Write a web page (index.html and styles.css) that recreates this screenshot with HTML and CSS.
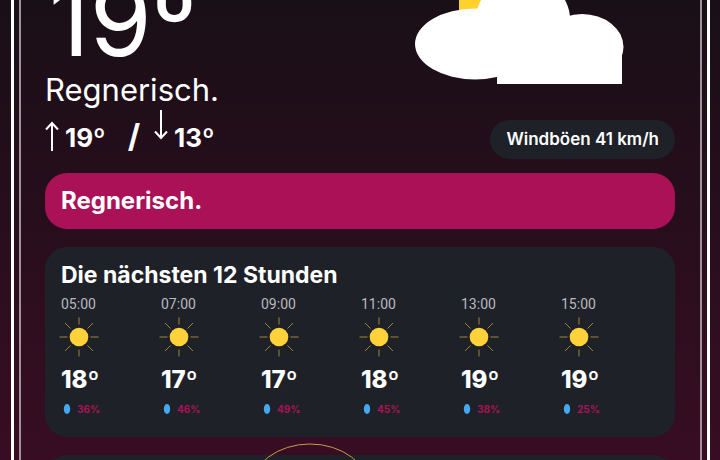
FILE: index.html
```html
<!DOCTYPE html>
<html lang="de">
<head>
    <meta charset="UTF-8">
    <meta name="viewport" content="width=device-width, initial-scale=1.0">
    <title>Wetter</title>
    <link rel="stylesheet" href="styles.css">
</head>
<body>
    <svg width="0" height="0" class="symbols" aria-hidden="true">
        <symbol id="sun" viewBox="0 0 40 40">
            <circle cx="20" cy="20" r="9.3" fill="#ffd23a"/>
            <path d="M20 .5v7M20 32.500v7M.5 20h8M31.500 20h8M6 6l5.500 5.500M28.500 28.500l5.500 5.500M6 34l5.500-5.500M28.500 11.500l5.500-5.500" stroke="#9c8637" stroke-width="1" fill="none"/>
        </symbol>
        <symbol id="drop" viewBox="0 0 12 12">
            <ellipse cx="6" cy="6" rx="3.2" ry="5" fill="#42a9ee"/>
        </symbol>
    </svg>

    <div class="frame">
        <main class="content">
            <section class="current">
                <div class="reading">
                    <h1 class="temperature">19º</h1>
                    <p class="condition">Regnerisch.</p>
                    <div class="range">
                        <svg class="arrow" viewBox="0 0 14 30" aria-hidden="true">
                            <path d="M7 30V2M1 8.500L7 2l6 6.500"/>
                        </svg>
                        <strong>19º</strong>
                        <span class="slash">/</span>
                        <svg class="arrow arrow-down" viewBox="0 0 14 30" aria-hidden="true">
                            <path d="M7 0v28M1 21.500L7 28l6-6.500"/>
                        </svg>
                        <strong>13º</strong>
                    </div>
                </div>
                <div class="sky">
                    <svg class="cloud" viewBox="0 0 260 84" aria-hidden="true">
                        <path d="M44 0h24v14H44z" fill="#ffd12f"/>
                        <g fill="#fff">
                            <ellipse cx="60" cy="44" rx="60" ry="35.500"/>
                            <ellipse cx="108" cy="19" rx="47" ry="42"/>
                            <ellipse cx="167" cy="47" rx="41.500" ry="33"/>
                            <path d="M82 40h125v44H82z"/>
                        </g>
                    </svg>
                    <div class="wind">Windböen 41 km/h</div>
                </div>
            </section>

            <section class="banner">Regnerisch.</section>

            <section class="card">
                <h2>Die nächsten 12 Stunden</h2>
                <div class="hours">
                    <div class="hour">
                        <time>05:00</time>
                        <svg class="sun"><use href="#sun"/></svg>
                        <strong>18º</strong>
                        <span class="rain"><svg class="drop"><use href="#drop"/></svg>36%</span>
                    </div>
                    <div class="hour">
                        <time>07:00</time>
                        <svg class="sun"><use href="#sun"/></svg>
                        <strong>17º</strong>
                        <span class="rain"><svg class="drop"><use href="#drop"/></svg>46%</span>
                    </div>
                    <div class="hour">
                        <time>09:00</time>
                        <svg class="sun"><use href="#sun"/></svg>
                        <strong>17º</strong>
                        <span class="rain"><svg class="drop"><use href="#drop"/></svg>49%</span>
                    </div>
                    <div class="hour">
                        <time>11:00</time>
                        <svg class="sun"><use href="#sun"/></svg>
                        <strong>18º</strong>
                        <span class="rain"><svg class="drop"><use href="#drop"/></svg>45%</span>
                    </div>
                    <div class="hour">
                        <time>13:00</time>
                        <svg class="sun"><use href="#sun"/></svg>
                        <strong>19º</strong>
                        <span class="rain"><svg class="drop"><use href="#drop"/></svg>38%</span>
                    </div>
                    <div class="hour">
                        <time>15:00</time>
                        <svg class="sun"><use href="#sun"/></svg>
                        <strong>19º</strong>
                        <span class="rain"><svg class="drop"><use href="#drop"/></svg>25%</span>
                    </div>
                </div>
            </section>

            <section class="card sun-card">
                <svg class="sun-path" viewBox="0 0 120 92" aria-hidden="true">
                    <ellipse cx="60" cy="46" rx="59" ry="45" fill="none" stroke="#c79d44"/>
                </svg>
            </section>
        </main>
    </div>
</body>
</html>
```

FILE: styles.css
```css
:root {
    --card: #1f2128;
    --accent: #ab1157;
}

* {
    box-sizing: border-box;
}

body {
    margin: 0;
    height: 100vh;
    overflow: hidden;
    font-family: Inter, "Open Sans", sans-serif;
    color: white;
    background: linear-gradient(#190f17, #250e1b 40%, #380d23);
}

h1, h2, p {
    margin: 0;
}

.symbols {
    position: absolute;
}

/* double line around the whole page */
.frame {
    height: 100%;
    margin: 0 10px 0 11px;
    padding: 0 5px;
    border: solid white;
    border-width: 0 3px;
}

.content {
    height: 100%;
    padding: 0 25px 0 24px;
    border: solid #a0929c;
    border-width: 0 2px;
    overflow: hidden;
}

.current {
    display: flex;
    justify-content: space-between;
}

.temperature {
    margin-left: 4px;
    font-size: 100px;
    font-weight: 400;
    line-height: 40px;
}

.condition {
    margin-top: 30px;
    font-size: 31px;
    font-weight: 400;
    line-height: 40px;
}

.range {
    display: flex;
    align-items: center;
    height: 52px;
    font-size: 26px;
    line-height: 34px;
}

.range strong {
    margin-left: 6px;
    padding-top: 4px;
}

.arrow {
    width: 14px;
    height: 30px;
    fill: none;
    stroke: white;
    stroke-width: 2;
}

.arrow-down {
    align-self: flex-start;
}

.slash {
    margin: 0 14px 0 22px;
    font-size: 32px;
    font-weight: 700;
}

.sky {
    display: flex;
    flex-direction: column;
    align-items: flex-end;
    gap: 36px;
}

.cloud {
    width: 260px;
    height: 84px;
}

.wind {
    padding: 0 16px;
    border-radius: 20px;
    background: var(--card);
    font-size: 17px;
    font-weight: 600;
    line-height: 39px;
}

.banner {
    margin-top: 11px;
    padding: 12px 16px;
    border-radius: 22px;
    background: var(--accent);
    font-size: 24px;
    font-weight: 700;
    line-height: 32px;
}

.card {
    margin-top: 18px;
    padding: 12px 16px 20px;
    border-radius: 22px;
    background: var(--card);
}

.card h2 {
    font-size: 23px;
    font-weight: 700;
    line-height: 32px;
}

.hours {
    display: grid;
    grid-template-columns: repeat(6, 100px);
}

.hour {
    display: flex;
    flex-direction: column;
}

.hour time {
    color: #b9b9be;
    font-family: Roboto, sans-serif;
    font-size: 14px;
    line-height: 26px;
}

.sun {
    width: 40px;
    height: 40px;
    margin-left: -2px;
}

.hour strong {
    padding-top: 2px;
    font-size: 24px;
    font-weight: 800;
    line-height: 42px;
}

.rain {
    display: flex;
    align-items: center;
    gap: 4px;
    color: var(--accent);
    font-size: 10px;
    font-weight: 700;
    line-height: 16px;
}

.drop {
    width: 12px;
    height: 12px;
}

.sun-card {
    position: relative;
    height: 180px;
}

/* the arc rises above the card's top edge */
.sun-path {
    position: absolute;
    top: -12px;
    left: 42%;
    width: 120px;
    height: 92px;
    transform: translateX(-50%);
}
```
